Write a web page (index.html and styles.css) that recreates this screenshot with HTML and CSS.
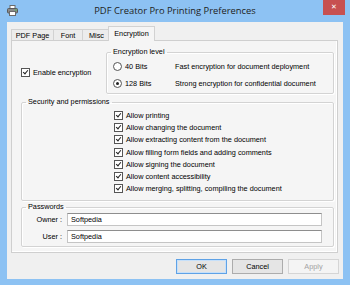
FILE: index.html
```html
<!DOCTYPE html>
<html lang="en">
<head>
    <meta charset="UTF-8">
    <title>PDF Creator Pro Printing Preferences</title>
    <link rel="stylesheet" href="styles.css">
</head>
<body>
    <div class="window">
        <div class="titlebar">
            <div class="tb-left">
                <svg class="app-icon" width="11" height="11" viewBox="0 0 11 11">
                    <rect x="3" y="0.5" width="5" height="3" fill="#fff" stroke="#6b6b6b"/>
                    <rect x="0.5" y="3.5" width="10" height="4.5" rx="1" fill="#8a8a8a" stroke="#5a5a5a"/>
                    <rect x="2.5" y="6.5" width="6" height="4" fill="#fff" stroke="#6b6b6b"/>
                    <rect x="8" y="4.5" width="1.5" height="1" fill="#4ad04a"/>
                </svg>
            </div>
            <div class="title">PDF Creator Pro Printing Preferences</div>
            <div class="tb-right">
                <div class="close">&#x2715;</div>
            </div>
        </div>

        <div class="client">
            <div class="tabs">
                <div class="tab tab-pdf">PDF Page</div>
                <div class="tab tab-font">Font</div>
                <div class="tab tab-misc">Misc</div>
                <div class="tab tab-enc active">Encryption</div>
            </div>

            <div class="panel">
                <div class="top-row">
                    <div class="option enable">
                        <span class="box checked"></span>
                        <span>Enable encryption</span>
                    </div>
                    <fieldset class="group level">
                        <legend>Encryption level</legend>
                        <div class="level-body">
                            <div class="level-row">
                                <span class="radio"></span>
                                <span class="bits">40 Bits</span>
                                <span>Fast encryption for document deployment</span>
                            </div>
                            <div class="level-row">
                                <span class="radio selected"></span>
                                <span class="bits">128 Bits</span>
                                <span>Strong encryption for confidential document</span>
                            </div>
                        </div>
                    </fieldset>
                </div>

                <fieldset class="group perms">
                    <legend>Security and permissions</legend>
                    <div class="perm-list">
                        <div class="option"><span class="box checked"></span><span>Allow printing</span></div>
                        <div class="option"><span class="box checked"></span><span>Allow changing the document</span></div>
                        <div class="option"><span class="box checked"></span><span>Allow extracting content from the document</span></div>
                        <div class="option"><span class="box checked"></span><span>Allow filling form fields and adding comments</span></div>
                        <div class="option"><span class="box checked"></span><span>Allow signing the document</span></div>
                        <div class="option"><span class="box checked"></span><span>Allow content accessibility</span></div>
                        <div class="option"><span class="box checked"></span><span>Allow merging, splitting, compiling the document</span></div>
                    </div>
                </fieldset>

                <fieldset class="group passwords">
                    <legend>Passwords</legend>
                    <div class="pw-list">
                        <div class="pw-row">
                            <span class="pw-label">Owner :</span>
                            <div class="input">Softpedia</div>
                        </div>
                        <div class="pw-row">
                            <span class="pw-label">User :</span>
                            <div class="input">Softpedia</div>
                        </div>
                    </div>
                </fieldset>
            </div>

            <div class="buttons">
                <div class="btn default">OK</div>
                <div class="btn">Cancel</div>
                <div class="btn disabled">Apply</div>
            </div>
        </div>
    </div>
</body>
</html>
```

FILE: styles.css
```css
body {
    margin: 0;
    background-color: #8dc2f3;
}
.window {
    width: 350px;
    height: 285px;
    display: flex;
    flex-direction: column;
    background-color: #8dc2f3;
    font-family: "Liberation Sans", Arial, sans-serif;
    font-size: 7.3px;
    color: #000;
}
.titlebar {
    height: 22px;
    display: grid;
    grid-template-columns: 1fr auto 1fr;
    align-items: start;
}
.tb-left {
    padding: 5px 0 0 7px;
}
.app-icon {
    display: block;
}
.title {
    font-family: "Open Sans", "Noto Sans", sans-serif;
    font-size: 9.4px;
    line-height: 22px;
    color: #222;
}
.tb-right {
    display: flex;
    justify-content: flex-end;
}
.close {
    width: 22px;
    height: 15px;
    margin-right: 5px;
    background-color: #c75050;
    color: #fff;
    font-family: "DejaVu Sans", sans-serif;
    font-size: 7px;
    font-weight: bold;
    line-height: 15px;
    text-align: center;
}
.client {
    flex: 1;
    margin: 0 7px 6px 7px;
    padding: 4px 4px 0 4px;
    background-color: #f0f0f0;
    display: flex;
    flex-direction: column;
}
.tabs {
    height: 14px;
    display: flex;
    align-items: flex-end;
    position: relative;
    z-index: 1;
}
.tab {
    height: 11px;
    line-height: 11px;
    box-sizing: border-box;
    border: 1px solid #d2d2d2;
    border-bottom: none;
    background-color: #ececec;
    text-align: center;
    margin-right: -1px;
}
.tab-pdf { width: 43px; }
.tab-font { width: 30px; }
.tab-misc { width: 29px; }
.tab-enc { width: 47px; }
.tab.active {
    height: 15px;
    line-height: 14px;
    margin-left: -2px;
    margin-bottom: -1px;
    background-color: #f5f5f5;
}
.panel {
    flex: 1;
    margin-right: 1px;
    padding: 6px 3px 0 9px;
    border: 1px solid #cfcfcf;
    background-color: #f5f5f5;
    box-shadow: inset -1px -1px 0 #fff;
}
.top-row {
    display: flex;
    align-items: center;
}
.enable {
    flex: 1;
    padding-top: 5px;
}
.group {
    margin: 0;
    padding: 0;
    border: 1px solid #d3d3d3;
    border-radius: 2px;
    box-shadow: inset 1px 1px 0 #fff, 1px 1px 0 #fff;
}
.group legend {
    margin-left: 4px;
    padding: 0 2px;
    line-height: 10px;
    height: 10px;
}
.level {
    width: 228px;
    box-sizing: border-box;
}
.level-body {
    padding: 3px 0 4px 6px;
}
.level-row {
    height: 12px;
    display: flex;
    align-items: center;
}
.level-row + .level-row {
    margin-top: 5px;
}
.bits {
    width: 50px;
    margin-left: 3px;
}
.radio {
    width: 7px;
    height: 7px;
    border: 1px solid #555;
    border-radius: 50%;
    background-color: #fff;
    position: relative;
}
.radio.selected::after {
    content: "";
    position: absolute;
    left: 2px;
    top: 2px;
    width: 3px;
    height: 3px;
    border-radius: 50%;
    background-color: #222;
}
.option {
    height: 12.3px;
    display: flex;
    align-items: center;
    gap: 3px;
}
.box {
    width: 7px;
    height: 7px;
    border: 1px solid #555;
    background-color: #fff;
    position: relative;
}
.box.checked::after {
    content: "";
    position: absolute;
    left: 2px;
    top: 0;
    width: 2px;
    height: 4px;
    border: solid #222;
    border-width: 0 1.5px 1.5px 0;
    transform: rotate(40deg);
}
.perms {
    margin-top: 3px;
}
.perm-list {
    padding: 2px 0 5px 92px;
}
.passwords {
    margin-top: 1px;
}
.pw-list {
    padding: 1px 0 3px 0;
}
.pw-row {
    display: flex;
    align-items: center;
    gap: 5px;
}
.pw-row + .pw-row {
    margin-top: 4px;
}
.pw-label {
    width: 40px;
    text-align: right;
}
.input {
    width: 255px;
    height: 13px;
    box-sizing: border-box;
    padding-left: 3px;
    line-height: 11px;
    background-color: #fff;
    border: 1px solid #c5c5c5;
    border-top-color: #8e8e8e;
}
.buttons {
    height: 26px;
    display: flex;
    justify-content: flex-end;
    align-items: flex-start;
    gap: 5px;
    padding-top: 6px;
    box-sizing: border-box;
}
.btn {
    width: 51px;
    height: 15px;
    box-sizing: border-box;
    border: 1px solid #acacac;
    background-color: #e5e5e5;
    text-align: center;
    line-height: 13px;
}
.btn.default {
    border-color: #5fa2e6;
    box-shadow: inset 0 0 0 1px #c6e0fa;
}
.btn.disabled {
    border-color: #d5d5d5;
    background-color: #f4f4f4;
    color: #a3a3a3;
}
```
